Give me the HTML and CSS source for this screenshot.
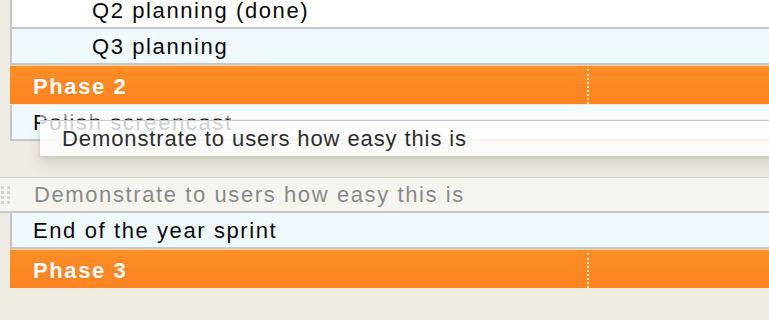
FILE: index.html
```html
<!DOCTYPE html>
<html lang="en">
<head>
    <meta charset="UTF-8">
    <title>Roadmap</title>
    <link rel="stylesheet" href="styles.css">
</head>
<body>
    <ul class="list">
        <li class="row row-white indent">Q2 planning (done)</li>
        <li class="row indent">Q3 planning</li>
        <li class="phase">
            <span class="phase-title">Phase 2</span>
            <span class="phase-col"></span>
        </li>
        <li class="row">Polish screencast</li>
        <li class="slot"></li>
        <li class="placeholder">
            <svg class="grip" width="10" height="20" viewBox="0 0 10 20">
                <rect x="0" y="1" width="3" height="3" fill="#d4d4ce"/>
                <rect x="6" y="1" width="3" height="3" fill="#d4d4ce"/>
                <rect x="0" y="6" width="3" height="3" fill="#d4d4ce"/>
                <rect x="6" y="6" width="3" height="3" fill="#d4d4ce"/>
                <rect x="0" y="11" width="3" height="3" fill="#d4d4ce"/>
                <rect x="6" y="11" width="3" height="3" fill="#d4d4ce"/>
                <rect x="0" y="16" width="3" height="3" fill="#d4d4ce"/>
                <rect x="6" y="16" width="3" height="3" fill="#d4d4ce"/>
            </svg>
            <span>Demonstrate to users how easy this is</span>
        </li>
        <li class="row">End of the year sprint</li>
        <li class="phase">
            <span class="phase-title">Phase 3</span>
            <span class="phase-col"></span>
        </li>
    </ul>

    <!-- item being dragged -->
    <div class="drag-helper">
        <span>Demonstrate to users how easy this is</span>
    </div>
</body>
</html>
```

FILE: styles.css
```css
body {
    margin: 0;
    background: #edebe2;
    font-family: "Liberation Sans", Arial, sans-serif;
    font-size: 22px;
    letter-spacing: 1.6px;
    overflow: hidden;
    height: 320px;
}

.list {
    list-style: none;
    margin: -7px 0 0 10px;
    padding: 0;
}

.row {
    height: 34px;
    line-height: 35px;
    padding-left: 21px;
    background: #f0f9fd;
    color: #0a0a0a;
    border-left: 2px solid #c3c7c7;
    border-bottom: 2px solid #c3c7c7;
    white-space: nowrap;
}

.row-white {
    background: #ffffff;
}

.indent {
    padding-left: 80px;
}

.phase {
    display: flex;
    height: 38px;
    background: linear-gradient(#fd8d26, #fc8420);
    border-top: 1px solid #fbcf9f;
    border-bottom: 1px solid #f7e7d5;
    color: #fff;
    font-weight: bold;
}

.phase-title {
    width: 554px;
    flex: none;
    padding-left: 23px;
    line-height: 41px;
    text-shadow: 0 0 1px rgba(150, 60, 0, 0.3);
}

.phase-col {
    margin-top: 3px;
    border-left: 2px dotted #fff1b8;
}

.slot {
    height: 36px;
}

.placeholder {
    display: flex;
    align-items: center;
    margin-left: -10px;
    height: 33px;
    background: #f5f4ef;
    border-top: 1px solid #d9d8d0;
    border-bottom: 2px solid #c3c7c7;
    color: #8a8a8a;
}

.grip {
    margin: 0 23px 0 1px;
    flex: none;
}

.drag-helper {
    position: absolute;
    left: 40px;
    top: 111px;
    width: 760px;
    height: 44px;
    padding-top: 9px;
    background: linear-gradient(rgba(255, 255, 255, 0.55), rgba(255, 255, 255, 0.55)) top / 100% 8px no-repeat;
    color: #2e2e2e;
    letter-spacing: 0.9px;
}

.drag-helper span {
    display: block;
    height: 35px;
    line-height: 35px;
    padding-left: 22px;
    border-top: 1px solid #c6cacb;
    background: rgba(255, 255, 255, 0.8);
    box-shadow: 0 8px 12px rgba(120, 120, 100, 0.18), -1px 2px 3px rgba(0, 0, 0, 0.08);
}
```
